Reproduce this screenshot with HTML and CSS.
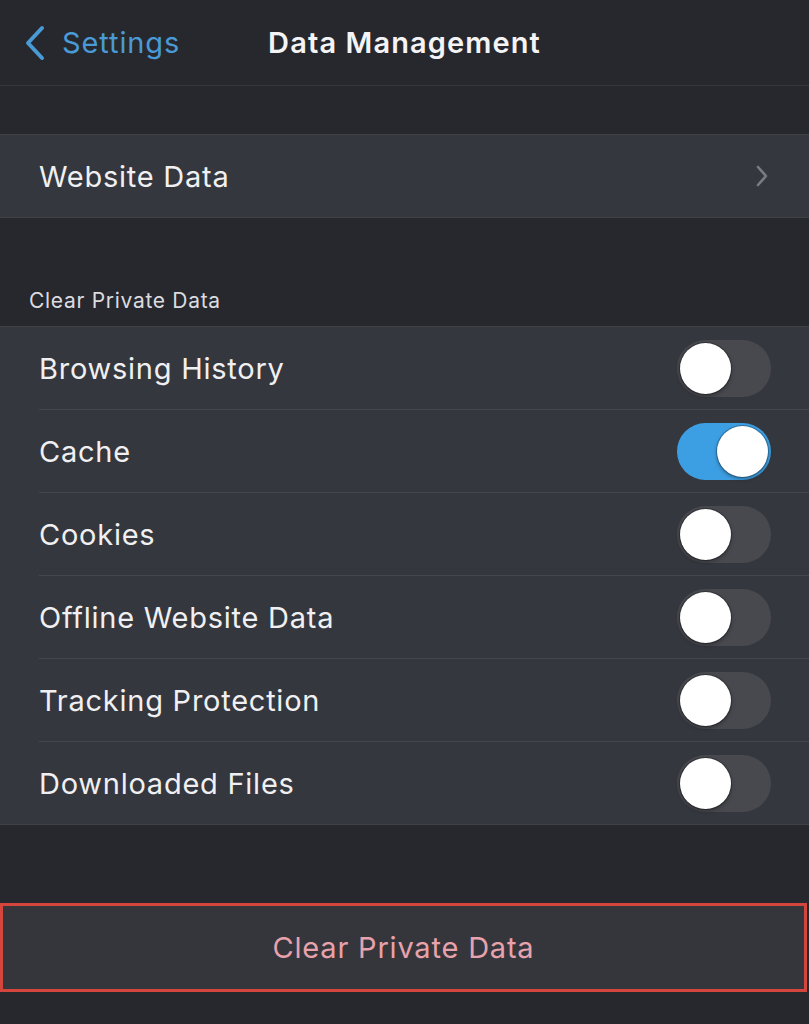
FILE: index.html
```html
<!DOCTYPE html>
<html>
<head>
<meta charset="utf-8">
<link rel="stylesheet" href="styles.css">
</head>
<body>
<div class="screen">
  <header class="nav">
    <div class="back">
      <svg class="back-icon" width="22" height="36" viewBox="0 0 22 36"><path d="M18 3 L4 18 L18 33" fill="none" stroke="#4a9ad6" stroke-width="4" stroke-linecap="round" stroke-linejoin="round"/></svg>
      <span class="back-label">Settings</span>
    </div>
    <div class="title">Data Management</div>
  </header>

  <div class="spacer s1"></div>

  <section class="group">
    <div class="row">
      <span class="label">Website Data</span>
      <svg class="chev" width="14" height="22" viewBox="0 0 14 22"><path d="M3 2 L11 11 L3 20" fill="none" stroke="#7b7c82" stroke-width="2.6" stroke-linecap="round" stroke-linejoin="round"/></svg>
    </div>
  </section>

  <div class="section-head">Clear Private Data</div>

  <section class="group">
    <div class="row"><span class="label">Browsing History</span><span class="toggle"><span class="knob"></span></span></div>
    <div class="row"><span class="label">Cache</span><span class="toggle on"><span class="knob"></span></span></div>
    <div class="row"><span class="label">Cookies</span><span class="toggle"><span class="knob"></span></span></div>
    <div class="row"><span class="label">Offline Website Data</span><span class="toggle"><span class="knob"></span></span></div>
    <div class="row"><span class="label">Tracking Protection</span><span class="toggle"><span class="knob"></span></span></div>
    <div class="row"><span class="label">Downloaded Files</span><span class="toggle"><span class="knob"></span></span></div>
  </section>

  <div class="spacer s2"></div>

  <div class="clear-btn">Clear Private Data</div>
</div>
</body>
</html>
```

FILE: styles.css
```css
html, body {
  margin: 0;
  padding: 0;
  background: #26282d;
}
.screen {
  width: 809px;
  height: 1024px;
  overflow: hidden;
  background: #26282d;
  font-family: "Inter", "Roboto", "Liberation Sans", sans-serif;
  color: #f2f2f4;
}
.nav {
  height: 85px;
  border-bottom: 1px solid #35373c;
  display: flex;
  align-items: center;
  position: relative;
}
.back {
  display: flex;
  align-items: center;
  padding-left: 24px;
  gap: 16px;
}
.back-label {
  font-size: 29px;
  color: #4a9ad6;
  letter-spacing: 0.9px;
}
.title {
  position: absolute;
  left: 0;
  right: 0;
  text-align: center;
  font-size: 29px;
  font-weight: 600;
  letter-spacing: 1.1px;
  color: #f4f4f6;
  pointer-events: none;
}
.spacer.s1 { height: 48px; }
.spacer.s2 { height: 78px; }
.group {
  background: #35373e;
  border-top: 1px solid #3f4147;
  border-bottom: 1px solid #3f4147;
}
.row {
  height: 82px;
  display: flex;
  align-items: center;
  justify-content: space-between;
  padding-left: 39px;
  padding-right: 38px;
  position: relative;
}
.row + .row::before {
  content: "";
  position: absolute;
  left: 39px;
  right: 0;
  top: -1px;
  height: 1px;
  background: #45474d;
}
.row + .row {
  margin-top: 1px;
}
.label {
  font-size: 29px;
  letter-spacing: 0.75px;
  color: #f0f0f2;
}
.chev {
  margin-right: 2px;
}
.section-head {
  height: 108px;
  box-sizing: border-box;
  display: flex;
  align-items: flex-end;
  padding-left: 29px;
  padding-bottom: 13px;
  font-size: 21px;
  letter-spacing: 0.7px;
  color: #dcdce0;
}
.toggle {
  width: 94px;
  height: 57px;
  border-radius: 29px;
  background: #48494f;
  position: relative;
  flex: none;
}
.toggle.on {
  background: #3d9fe3;
}
.knob {
  position: absolute;
  top: 3px;
  left: 3px;
  width: 51px;
  height: 51px;
  border-radius: 50%;
  background: #ffffff;
  box-shadow: 0 0 0 1px rgba(0,0,0,0.25), 0 2px 4px rgba(0,0,0,0.35);
}
.toggle.on .knob {
  left: 40px;
}
.clear-btn {
  height: 83px;
  margin: 0 2px 0 0;
  border: 3px solid #d4463d;
  background: #34363c;
  display: flex;
  align-items: center;
  justify-content: center;
  font-size: 29px;
  letter-spacing: 0.8px;
  color: #e8a2ac;
}
```
